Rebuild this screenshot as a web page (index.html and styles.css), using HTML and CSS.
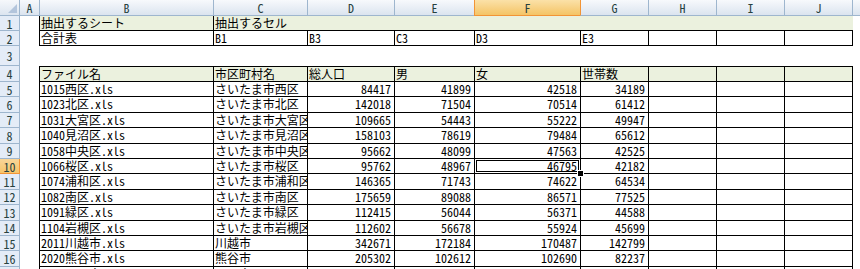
FILE: index.html
```html
<!DOCTYPE html>
<html lang="ja">
<head>
<meta charset="utf-8">
<link rel="stylesheet" href="styles.css">
</head>
<body>
<div class="sheet">
  <div class="row hdr">
    <div class="corner"><span class="tri"></span></div>
    <div class="ch a">A</div><div class="ch">B</div><div class="ch">C</div><div class="ch">D</div><div class="ch">E</div><div class="ch ch-sel">F</div><div class="ch after-sel">G</div><div class="ch">H</div><div class="ch">I</div><div class="ch last">J</div><div class="ch k"></div>
  </div>

  <div class="row r1">
    <div class="rh">1</div><div class="c"></div>
    <div class="c g bl bb">抽出するシート</div><div class="c g bl bb">抽出するセル</div>
    <div class="c g bb"></div><div class="c g bb"></div><div class="c g bb"></div><div class="c g bb"></div><div class="c g bb"></div><div class="c g bb"></div><div class="c g bb"></div><div class="c"></div>
  </div>

  <div class="row r2">
    <div class="rh">2</div><div class="c"></div>
    <div class="c t">合計表</div><div class="c t">B1</div><div class="c t">B3</div><div class="c t">C3</div><div class="c t">D3</div><div class="c t">E3</div><div class="c t"></div><div class="c t"></div><div class="c t last"></div><div class="c"></div>
  </div>

  <div class="row r3">
    <div class="rh">3</div><div class="c"></div><div class="c"></div><div class="c"></div><div class="c"></div><div class="c"></div><div class="c"></div><div class="c"></div><div class="c"></div><div class="c"></div><div class="c"></div><div class="c"></div>
  </div>

  <div class="row r4">
    <div class="rh">4</div><div class="c"></div>
    <div class="c t g bt">ファイル名</div><div class="c t g bt">市区町村名</div><div class="c t g bt">総人口</div><div class="c t g bt">男</div><div class="c t g bt">女</div><div class="c t g bt">世帯数</div><div class="c t g bt"></div><div class="c t g bt"></div><div class="c t g bt last"></div><div class="c"></div>
  </div>

  <div class="row d"><div class="rh">5</div><div class="c"></div><div class="c t">1015西区.xls</div><div class="c t">さいたま市西区</div><div class="c t n">84417</div><div class="c t n">41899</div><div class="c t n">42518</div><div class="c t n">34189</div><div class="c t"></div><div class="c t"></div><div class="c t last"></div><div class="c"></div></div>
  <div class="row d"><div class="rh">6</div><div class="c"></div><div class="c t">1023北区.xls</div><div class="c t">さいたま市北区</div><div class="c t n">142018</div><div class="c t n">71504</div><div class="c t n">70514</div><div class="c t n">61412</div><div class="c t"></div><div class="c t"></div><div class="c t last"></div><div class="c"></div></div>
  <div class="row d"><div class="rh">7</div><div class="c"></div><div class="c t">1031大宮区.xls</div><div class="c t">さいたま市大宮区</div><div class="c t n">109665</div><div class="c t n">54443</div><div class="c t n">55222</div><div class="c t n">49947</div><div class="c t"></div><div class="c t"></div><div class="c t last"></div><div class="c"></div></div>
  <div class="row d"><div class="rh">8</div><div class="c"></div><div class="c t">1040見沼区.xls</div><div class="c t">さいたま市見沼区</div><div class="c t n">158103</div><div class="c t n">78619</div><div class="c t n">79484</div><div class="c t n">65612</div><div class="c t"></div><div class="c t"></div><div class="c t last"></div><div class="c"></div></div>
  <div class="row d"><div class="rh">9</div><div class="c"></div><div class="c t">1058中央区.xls</div><div class="c t">さいたま市中央区</div><div class="c t n">95662</div><div class="c t n">48099</div><div class="c t n">47563</div><div class="c t n">42525</div><div class="c t"></div><div class="c t"></div><div class="c t last"></div><div class="c"></div></div>
  <div class="row d"><div class="rh rh-sel">10</div><div class="c"></div><div class="c t">1066桜区.xls</div><div class="c t">さいたま市桜区</div><div class="c t n">95762</div><div class="c t n">48967</div><div class="c t n sel">46795<span class="handle"></span></div><div class="c t n">42182</div><div class="c t"></div><div class="c t"></div><div class="c t last"></div><div class="c"></div></div>
  <div class="row d"><div class="rh">11</div><div class="c"></div><div class="c t">1074浦和区.xls</div><div class="c t">さいたま市浦和区</div><div class="c t n">146365</div><div class="c t n">71743</div><div class="c t n">74622</div><div class="c t n">64534</div><div class="c t"></div><div class="c t"></div><div class="c t last"></div><div class="c"></div></div>
  <div class="row d"><div class="rh">12</div><div class="c"></div><div class="c t">1082南区.xls</div><div class="c t">さいたま市南区</div><div class="c t n">175659</div><div class="c t n">89088</div><div class="c t n">86571</div><div class="c t n">77525</div><div class="c t"></div><div class="c t"></div><div class="c t last"></div><div class="c"></div></div>
  <div class="row d"><div class="rh">13</div><div class="c"></div><div class="c t">1091緑区.xls</div><div class="c t">さいたま市緑区</div><div class="c t n">112415</div><div class="c t n">56044</div><div class="c t n">56371</div><div class="c t n">44588</div><div class="c t"></div><div class="c t"></div><div class="c t last"></div><div class="c"></div></div>
  <div class="row d"><div class="rh">14</div><div class="c"></div><div class="c t">1104岩槻区.xls</div><div class="c t">さいたま市岩槻区</div><div class="c t n">112602</div><div class="c t n">56678</div><div class="c t n">55924</div><div class="c t n">45699</div><div class="c t"></div><div class="c t"></div><div class="c t last"></div><div class="c"></div></div>
  <div class="row d"><div class="rh">15</div><div class="c"></div><div class="c t">2011川越市.xls</div><div class="c t">川越市</div><div class="c t n">342671</div><div class="c t n">172184</div><div class="c t n">170487</div><div class="c t n">142799</div><div class="c t"></div><div class="c t"></div><div class="c t last"></div><div class="c"></div></div>
  <div class="row d"><div class="rh">16</div><div class="c"></div><div class="c t">2020熊谷市.xls</div><div class="c t">熊谷市</div><div class="c t n">205302</div><div class="c t n">102612</div><div class="c t n">102690</div><div class="c t n">82237</div><div class="c t"></div><div class="c t"></div><div class="c t last"></div><div class="c"></div></div>
  <div class="row d"><div class="rh">17</div><div class="c"></div><div class="c t">2030川口市.xls</div><div class="c t">川口市</div><div class="c t n">517171</div><div class="c t n">263647</div><div class="c t n">253524</div><div class="c t n">222559</div><div class="c t"></div><div class="c t"></div><div class="c t last"></div><div class="c"></div></div>
</div>
</body>
</html>
```

FILE: styles.css
```css
* { box-sizing: border-box; }
html, body {
  margin: 0;
  padding: 0;
  background: #fff;
  overflow: hidden;
}
body {
  width: 860px;
  height: 269px;
  font-family: "Noto Sans CJK JP", "Noto Sans", sans-serif;
  font-size: 12px;
  color: #000;
  font-feature-settings: "hwid" 1;
}
.sheet { width: 860px; }
.row {
  display: grid;
  grid-template-columns: 20px 19px 174px 94px 87px 80px 106px 68px 68px 68px 69px 1fr;
}
.hdr { height: 16px; }
.r1 { height: 15px; }
.r2 { height: 15px; }
.r3 { height: 20px; }
.r4 { height: 16px; }
.d { height: 15.4px; }

/* column headers */
.corner {
  position: relative;
  background: linear-gradient(#f6f8fb, #dce5f0);
  border-right: 1px solid #9eb6ce;
  border-bottom: 1px solid #9eb6ce;
}
.tri {
  position: absolute;
  right: 2px;
  bottom: 2px;
  width: 0;
  height: 0;
  border-left: 9px solid transparent;
  border-bottom: 9px solid #b3c5dc;
}
.ch {
  background: linear-gradient(#f7f9fc, #dbe4ef);
  border-left: 1px solid #9eb6ce;
  border-bottom: 1px solid #9eb6ce;
  color: #27413e;
  font-size: 12px;
  line-height: 15px;
  text-align: center;
}
.ch.a { border-left: none; }
.ch.last { border-right: 1px solid #9eb6ce; }
.ch.k { border-left: none; }
.ch-sel {
  background: linear-gradient(#fbe1a8, #f4c466);
  border-left-color: #f29436;
  border-bottom-color: #f29436;
}
.ch.after-sel { border-left-color: #f29436; }

/* row headers */
.rh {
  background: #e4ecf7;
  border-right: 1px solid #9eb6ce;
  border-bottom: 1px solid #9eb6ce;
  color: #27413e;
  font-size: 12px;
  text-align: center;
  display: flex;
  align-items: center;
  justify-content: center;
  line-height: 1;
  padding-top: 1px;
}
.rh-sel {
  background: linear-gradient(#f9d699, #f6c56a);
  border-bottom-color: #f29436;
  border-right-color: #f29436;
}

/* cells */
.c {
  overflow: hidden;
  white-space: nowrap;
  padding: 0 3px 0 1px;
  line-height: 14px;
  min-width: 0;
}
.g { background: #ebf1de; }
.bl { border-left: 1px solid #000; }
.bb { border-bottom: 1px solid #000; }
.t {
  border-left: 1px solid #000;
  border-bottom: 1px solid #000;
}
.t.last { border-right: 1px solid #000; }
.bt { border-top: 1px solid #000; }
.n { text-align: right; }
.sel { position: relative; overflow: visible; }
.sel::after {
  content: "";
  position: absolute;
  inset: 0;
  box-shadow: inset 0 0 0 1px #fff, inset 0 0 0 2px #000;
}
.handle {
  position: absolute;
  right: -4px;
  bottom: -4px;
  width: 7px;
  height: 7px;
  background: #000;
  border: 1px solid #fff;
  z-index: 2;
}
```
